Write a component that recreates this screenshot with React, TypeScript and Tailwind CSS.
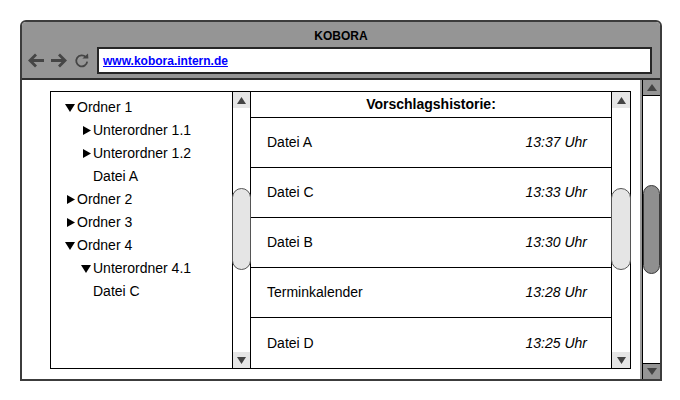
import React from "react";

type TreeItem = { label: string; level: number; toggle?: "open" | "closed" };

const tree: TreeItem[] = [
  { label: "Ordner 1", level: 1, toggle: "open" },
  { label: "Unterordner 1.1", level: 2, toggle: "closed" },
  { label: "Unterordner 1.2", level: 2, toggle: "closed" },
  { label: "Datei A", level: 2 },
  { label: "Ordner 2", level: 1, toggle: "closed" },
  { label: "Ordner 3", level: 1, toggle: "closed" },
  { label: "Ordner 4", level: 1, toggle: "open" },
  { label: "Unterordner 4.1", level: 2, toggle: "open" },
  { label: "Datei C", level: 2 },
];

const history = [
  { name: "Datei A", time: "13:37 Uhr" },
  { name: "Datei C", time: "13:33 Uhr" },
  { name: "Datei B", time: "13:30 Uhr" },
  { name: "Terminkalender", time: "13:28 Uhr" },
  { name: "Datei D", time: "13:25 Uhr" },
];

const Toggle = ({ kind }: { kind?: "open" | "closed" }) => {
  if (kind === "open")
    return (
      <svg width="10" height="8" viewBox="0 0 10 8">
        <polygon points="0,0 10,0 5,8" fill="#000" />
      </svg>
    );
  if (kind === "closed")
    return (
      <svg width="8" height="9" viewBox="0 0 8 9">
        <polygon points="0,0 8,4.5 0,9" fill="#000" />
      </svg>
    );
  return null;
};

const Arrow = ({ up, color, w = 9, h = 7 }: { up?: boolean; color: string; w?: number; h?: number }) => (
  <svg width={w} height={h} viewBox={`0 0 ${w} ${h}`}>
    <polygon points={up ? `0,${h} ${w},${h} ${w / 2},0` : `0,0 ${w},0 ${w / 2},${h}`} fill={color} />
  </svg>
);

// small scrollbar inside the panel
const InnerScroll = ({ className }: { className: string }) => (
  <div className={`w-[19px] flex flex-col border-black ${className}`}>
    <div className="h-[16px] bg-[#e6e6e6] flex items-center justify-center">
      <Arrow up color="#444" />
    </div>
    <div className="flex-1 relative">
      <div className="absolute top-[80px] -left-px -right-px h-[82px] rounded-full bg-[#e5e5e5] border border-[#555]" />
    </div>
    <div className="h-[16px] bg-[#e6e6e6] flex items-center justify-center">
      <Arrow color="#444" />
    </div>
  </div>
);

export default function App() {
  return (
    <div className="w-[680px] h-[400px] bg-white pt-5 pl-5 font-['Liberation_Sans',Arial,sans-serif] text-black">
      <div className="w-[642px] h-[361px] border-2 border-[#3c3c3c] rounded-t-[6px] flex flex-col overflow-hidden">
        {/* browser chrome */}
        <div className="h-[60px] bg-[#959595] border-b-2 border-[#2e2e2e] flex flex-col">
          <div className="pt-[7px] leading-[14px] text-[12px] font-bold text-center">KOBORA</div>
          <div className="mt-[4px] flex items-center">
            <svg width="18" height="15" viewBox="0 0 18 15" className="ml-[5px]">
              <path d="M17 7.5H3 M9 1.5 L3 7.5 L9 13.5" stroke="#454545" strokeWidth="2.8" fill="none" />
            </svg>
            <svg width="18" height="15" viewBox="0 0 18 15" className="ml-[5px]">
              <path d="M1 7.5H15 M9 1.5 L15 7.5 L9 13.5" stroke="#454545" strokeWidth="2.8" fill="none" />
            </svg>
            <svg width="16" height="15" viewBox="0 0 16 15" className="ml-[6px]">
              <path d="M11.8 4.2 A5.5 5.5 0 1 0 13.2 8.6" stroke="#454545" strokeWidth="1.8" fill="none" />
              <polygon points="8.4,5.4 14.4,5.4 14,0.4" fill="#454545" />
            </svg>
            <div className="ml-[7px] w-[555px] h-[27px] bg-white border-2 border-[#262626] flex items-center pl-[4px]">
              <span className="text-[12px] font-bold text-[#0000ff] underline leading-none">www.kobora.intern.de</span>
            </div>
          </div>
        </div>

        {/* page */}
        <div className="flex-1 flex bg-white">
          <div className="flex-1 pt-[11px] pl-[28px] pr-[9px] pb-[10px]">
            <div className="h-full flex border border-black text-[14px]">
              <div className="w-[181px] pt-[4px]">
                {tree.map((item) => (
                  <div
                    key={item.label}
                    className={`flex items-center leading-[23px] ${item.level === 1 ? "pl-[14px]" : "pl-[30px]"}`}
                  >
                    <span className="w-[12px] flex justify-end pr-[2px]">
                      <Toggle kind={item.toggle} />
                    </span>
                    <span>{item.label}</span>
                  </div>
                ))}
              </div>
              <InnerScroll className="border-x" />
              <div className="flex-1 flex flex-col overflow-hidden">
                <div className="h-[26px] shrink-0 border-b border-black flex items-center justify-center font-bold">
                  Vorschlagshistorie:
                </div>
                {history.map((row, i) => (
                  <div
                    key={row.name}
                    className={`h-[50px] shrink-0 flex items-center justify-between pl-[16px] pr-[24px] ${i < history.length - 1 ? "border-b border-black" : ""}`}
                  >
                    <span>{row.name}</span>
                    <span className="italic">{row.time}</span>
                  </div>
                ))}
              </div>
              <InnerScroll className="border-l" />
            </div>
          </div>

          {/* window scrollbar */}
          <div className="w-[20px] flex flex-col border-l-2 border-l-[#9a9a9a]">
            <div className="flex-1 flex flex-col border-l border-black">
              <div className="h-[16px] bg-[#959595] border-b border-black flex items-center justify-center">
                <Arrow up color="#444" w={10} h={7} />
              </div>
              <div className="flex-1 relative">
                <div className="absolute top-[89px] left-0 right-0 h-[89px] rounded-full bg-[#8f8f8f] border border-[#3a3a3a]" />
              </div>
              <div className="h-[16px] bg-[#959595] border-t border-black flex items-center justify-center">
                <Arrow color="#444" w={10} h={7} />
              </div>
            </div>
          </div>
        </div>
      </div>
    </div>
  );
}
